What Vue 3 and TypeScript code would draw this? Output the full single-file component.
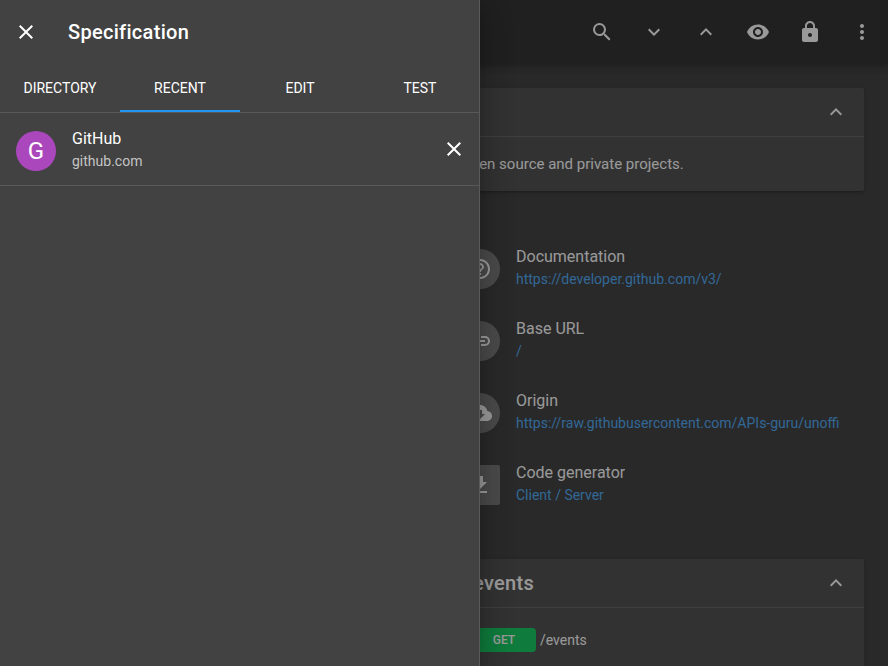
<script setup lang="ts">
const icons = {
  close: "M19 6.41L17.59 5 12 10.59 6.41 5 5 6.41 10.59 12 5 17.59 6.41 19 12 13.41 17.59 19 19 17.59 13.41 12z",
  search: "M15.5 14h-.79l-.28-.27A6.471 6.471 0 0 0 16 9.5 6.5 6.5 0 1 0 9.5 16c1.61 0 3.09-.59 4.23-1.57l.27.28v.79l5 4.99L20.49 19l-4.99-5zm-6 0C7.01 14 5 11.99 5 9.5S7.01 5 9.5 5 14 7.01 14 9.5 11.99 14 9.5 14z",
  down: "M16.59 8.59L12 13.17 7.41 8.59 6 10l6 6 6-6z",
  up: "M12 8l-6 6 1.41 1.41L12 10.83l4.59 4.58L18 14z",
  eye: "M12 4.5C7 4.5 2.73 7.61 1 12c1.73 4.39 6 7.5 11 7.5s9.27-3.11 11-7.5c-1.73-4.39-6-7.5-11-7.5zM12 17c-2.76 0-5-2.24-5-5s2.24-5 5-5 5 2.24 5 5-2.24 5-5 5zm0-8c-1.66 0-3 1.34-3 3s1.34 3 3 3 3-1.34 3-3-1.34-3-3-3z",
  lock: "M18 8h-1V6c0-2.76-2.24-5-5-5S7 3.24 7 6v2H6c-1.1 0-2 .9-2 2v10c0 1.1.9 2 2 2h12c1.1 0 2-.9 2-2V10c0-1.1-.9-2-2-2zm-6 9c-1.1 0-2-.9-2-2s.9-2 2-2 2 .9 2 2-.9 2-2 2zm3.1-9H8.9V6c0-1.71 1.39-3.1 3.1-3.1 1.71 0 3.1 1.39 3.1 3.1v2z",
  more: "M12 8c1.1 0 2-.9 2-2s-.9-2-2-2-2 .9-2 2 .9 2 2 2zm0 2c-1.1 0-2 .9-2 2s.9 2 2 2 2-.9 2-2-.9-2-2-2zm0 6c-1.1 0-2 .9-2 2s.9 2 2 2 2-.9 2-2-.9-2-2-2z",
  help: "M11 18h2v-2h-2v2zm1-16C6.48 2 2 6.48 2 12s4.48 10 10 10 10-4.48 10-10S17.52 2 12 2zm0 18c-4.41 0-8-3.59-8-8s3.59-8 8-8 8 3.59 8 8-3.59 8-8 8zm0-14c-2.21 0-4 1.79-4 4h2c0-1.1.9-2 2-2s2 .9 2 2c0 2-3 1.75-3 5h2c0-2.25 3-2.5 3-5 0-2.21-1.79-4-4-4z",
  base: "M13 7h4a5 5 0 0 1 0 10h-4v-2h4a3 3 0 0 0 0-6h-4zM4 11h13v2H4z",
  cloud: "M19.35 10.04C18.67 6.59 15.64 4 12 4 9.11 4 6.6 5.64 5.35 8.04 2.34 8.36 0 10.91 0 14c0 3.31 2.69 6 6 6h13c2.76 0 5-2.24 5-5 0-2.64-2.05-4.78-4.65-4.96zM17 13l-5 5-5-5h3V9h4v4h3z",
  download: "M19 9h-4V3H9v6H5l7 7 7-7zM5 18v2h14v-2H5z",
};

const tabs = ["DIRECTORY", "RECENT", "EDIT", "TEST"];
const toolbar = [icons.search, icons.down, icons.up, icons.eye, icons.lock, icons.more];
const infos = [
  { label: "Documentation", link: "https://developer.github.com/v3/", icon: icons.help, square: false },
  { label: "Base URL", link: "/", icon: icons.base, square: false },
  { label: "Origin", link: "https://raw.githubusercontent.com/APIs-guru/unofficial_openapi_specs/master/github.com/v3/swagger.yaml", icon: icons.cloud, square: false },
  { label: "Code generator", link: "Client / Server", icon: icons.download, square: true },
];
</script>

<template>
  <div class="page">
    <header class="topbar">
      <span class="spacer"></span>
      <button v-for="(d, i) in toolbar" :key="i" class="icon-btn">
        <svg viewBox="0 0 24 24" class="icon"><path :d="d" /></svg>
      </button>
    </header>

    <main class="content">
      <section class="card">
        <div class="card-head">
          <span class="card-title">GitHub</span>
          <svg viewBox="0 0 24 24" class="icon"><path :d="icons.up" /></svg>
        </div>
        <p class="card-text">Powerful collaboration, code review, and code management for open source and private projects.</p>
      </section>

      <div class="info-grid">
        <div v-for="info in infos" :key="info.label" class="info-row">
          <span class="avatar" :class="{ square: info.square }">
            <svg viewBox="0 0 24 24" class="icon"><path :d="info.icon" /></svg>
          </span>
          <div class="info-text">
            <div class="info-label">{{ info.label }}</div>
            <a class="info-link">{{ info.link }}</a>
          </div>
        </div>
      </div>

      <section class="card">
        <div class="card-head">
          <span class="card-title ops">events</span>
          <svg viewBox="0 0 24 24" class="icon"><path :d="icons.up" /></svg>
        </div>
        <div class="op">
          <span class="chip">GET</span>
          <span class="op-path">/events</span>
        </div>
      </section>
    </main>

    <div class="overlay"></div>

    <aside class="drawer">
      <div class="drawer-head">
        <svg viewBox="0 0 24 24" class="icon"><path :d="icons.close" /></svg>
        <span class="drawer-title">Specification</span>
      </div>
      <nav class="tabs">
        <div v-for="t in tabs" :key="t" class="tab" :class="{ active: t === 'RECENT' }">{{ t }}</div>
      </nav>
      <div class="recent">
        <span class="letter">G</span>
        <div class="recent-text">
          <div class="recent-name">GitHub</div>
          <div class="recent-host">github.com</div>
        </div>
        <svg viewBox="0 0 24 24" class="icon"><path :d="icons.close" /></svg>
      </div>
    </aside>
  </div>
</template>

<style>
html,
body {
  margin: 0;
  background: #303030;
  overflow: hidden;
}
</style>

<style scoped>
.page {
  position: relative;
  width: 888px;
  height: 666px;
  overflow: hidden;
  background: #303030;
  font-family: Roboto, "Liberation Sans", sans-serif;
  color: #fff;
}

.icon {
  width: 24px;
  height: 24px;
  display: block;
  fill: currentColor;
  flex: none;
}

.topbar {
  height: 64px;
  display: flex;
  align-items: center;
  gap: 16px;
  padding-right: 8px;
  background: #212121;
  box-shadow: 0 2px 4px -1px rgba(0, 0, 0, 0.2), 0 4px 5px 0 rgba(0, 0, 0, 0.14), 0 1px 10px 0 rgba(0, 0, 0, 0.12);
  position: relative;
  z-index: 1;
}

.spacer {
  flex: 1;
}

.icon-btn {
  width: 36px;
  height: 36px;
  padding: 6px;
  border: 0;
  background: none;
  color: #fff;
}

.content {
  padding: 24px 24px 0;
}

.card {
  background: #424242;
  border-radius: 2px;
  box-shadow: 0 3px 1px -2px rgba(0, 0, 0, 0.2), 0 2px 2px 0 rgba(0, 0, 0, 0.14), 0 1px 5px 0 rgba(0, 0, 0, 0.12);
}

.card-head {
  height: 48px;
  display: flex;
  align-items: center;
  justify-content: space-between;
  padding: 0 16px;
  border-bottom: 1px solid rgba(255, 255, 255, 0.12);
}

.card-title {
  font-size: 20px;
  font-weight: 500;
  letter-spacing: 0.3px;
}

.card-title.ops {
  padding-left: 433px;
}

.card-text {
  margin: 0;
  padding: 16px;
  font-size: 15px;
  line-height: 22px;
}

.info-grid {
  display: grid;
  grid-template-columns: 420px 420px;
  padding: 56px 0;
  row-gap: 32px;
}

.info-row {
  grid-column: 2;
  height: 40px;
  display: flex;
  align-items: center;
  gap: 16px;
  padding: 0 24px 0 16px;
  min-width: 0;
}

.avatar {
  width: 40px;
  height: 40px;
  margin-top: 4px;
  border-radius: 50%;
  background: rgba(255, 255, 255, 0.3);
  display: flex;
  align-items: center;
  justify-content: center;
  flex: none;
}

.avatar.square {
  border-radius: 2px;
}

.info-text {
  min-width: 0;
  overflow: hidden;
  white-space: nowrap;
}

.info-label {
  font-size: 16px;
  line-height: 24px;
}

.info-link {
  display: block;
  font-size: 14px;
  line-height: 20px;
  color: #42a5f5;
}

.op {
  display: flex;
  align-items: center;
  gap: 4px;
  height: 24px;
  padding: 20px 16px 20px 448px;
}

.chip {
  width: 64px;
  height: 24px;
  line-height: 24px;
  border-radius: 4px;
  background: #00c853;
  text-align: center;
  font-size: 12px;
  font-weight: 500;
}

.op-path {
  font-size: 14px;
}

.overlay {
  position: absolute;
  inset: 0;
  z-index: 2;
  background: rgba(33, 33, 33, 0.46);
}

.drawer {
  position: absolute;
  left: 0;
  top: 0;
  bottom: 0;
  z-index: 3;
  width: 480px;
  box-sizing: border-box;
  background: #424242;
  border-right: 1px solid rgba(255, 255, 255, 0.12);
  box-shadow: 0 8px 10px -5px rgba(0, 0, 0, 0.2), 0 16px 24px 2px rgba(0, 0, 0, 0.14), 0 6px 30px 5px rgba(0, 0, 0, 0.12);
}

.drawer-head {
  height: 64px;
  display: flex;
  align-items: center;
  gap: 30px;
  padding-left: 14px;
}

.drawer-title {
  font-size: 20px;
  font-weight: 500;
  letter-spacing: 0.3px;
}

.tabs {
  display: grid;
  grid-template-columns: repeat(4, 120px);
  height: 48px;
  border-bottom: 1px solid rgba(255, 255, 255, 0.12);
}

.tab {
  box-sizing: border-box;
  height: 48px;
  line-height: 48px;
  text-align: center;
  font-size: 14px;
  font-weight: 400;
  color: #fff;
}

.tab.active {
  border-bottom: 2px solid #2196f3;
}

.recent {
  height: 72px;
  display: flex;
  align-items: center;
  padding: 0 13px 0 16px;
  border-bottom: 1px solid rgba(255, 255, 255, 0.12);
}

.letter {
  width: 40px;
  height: 40px;
  margin-top: 4px;
  border-radius: 50%;
  background: #ab47bc;
  display: flex;
  align-items: center;
  justify-content: center;
  font-size: 24px;
  flex: none;
}

.recent-text {
  flex: 1;
  margin-left: 16px;
}

.recent-name {
  font-size: 16px;
  line-height: 24px;
}

.recent-host {
  font-size: 14px;
  line-height: 20px;
  color: rgba(255, 255, 255, 0.7);
}
</style>
